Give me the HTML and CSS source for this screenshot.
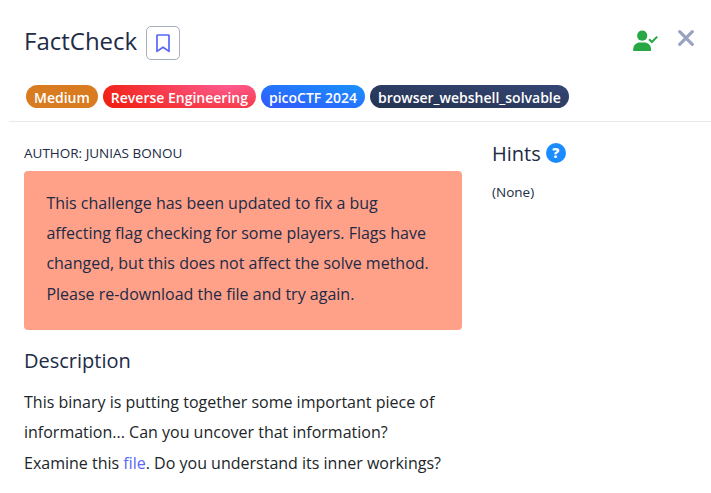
FILE: index.html
```html
<!DOCTYPE html>
<html lang="en">
<head>
<meta charset="utf-8">
<title>FactCheck</title>
<link rel="stylesheet" href="styles.css">
</head>
<body>
<div class="modal">
  <header class="header">
    <h1 class="title">FactCheck</h1>
    <button class="bookmark" aria-label="Bookmark">
      <svg width="14" height="19" viewBox="0 0 14 19"><path d="M1 1.600Q1 1 1.600 1H12.400Q13 1 13 1.600V17.400L7 13.200L1 17.400Z" fill="none" stroke="#5767f7" stroke-width="1.700" stroke-linejoin="round"/></svg>
    </button>
    <svg class="solved" width="26" height="22" viewBox="0 0 26 22"><circle cx="9.200" cy="5.700" r="5.100" fill="#28a745"/><path d="M0.200 21V19.300C.2 15 3.600 12.400 7 12.400H11.200C14.800 12.400 18 15 18 19.300V21Z" fill="#28a745"/><path d="M16 9.200L18.900 12L24.200 6.600" fill="none" stroke="#28a745" stroke-width="2"/></svg>
    <svg class="close" width="16" height="16" viewBox="0 0 16 16"><path d="M1.700 1.700L14.300 14.300M14.300 1.700L1.700 14.300" stroke="#9aa3bf" stroke-width="3.200" stroke-linecap="round"/></svg>
  </header>
  <div class="tags">
    <span class="tag medium">Medium</span>
    <span class="tag category">Reverse Engineering</span>
    <span class="tag event">picoCTF 2024</span>
    <span class="tag feature">browser_webshell_solvable</span>
  </div>
  <div class="columns">
    <main class="main">
      <p class="small">AUTHOR: JUNIAS BONOU</p>
      <div class="notice">This challenge has been updated to fix a bug<br>affecting flag checking for some players. Flags have<br>changed, but this does not affect the solve method.<br>Please re-download the file and try again.</div>
      <h2 class="heading description">Description</h2>
      <p class="body">This binary is putting together some important piece of<br>information... Can you uncover that information?<br>Examine this <a class="link">file</a>. Do you understand its inner workings?</p>
    </main>
    <aside class="hints">
      <h2 class="heading">Hints <span class="help">?</span></h2>
      <p class="small none">(None)</p>
    </aside>
  </div>
</div>
</body>
</html>
```
FILE: styles.css
```css
* { box-sizing: border-box; }
body {
  margin: 0;
  background: #fff;
  color: #212b45;
  font-family: "Open Sans", sans-serif;
  font-size: 16px;
  overflow: hidden;
}
h1, h2, p { margin: 0; font-weight: 400; }
svg { display: block; }
.header {
  display: flex;
  align-items: flex-start;
  height: 85px;
  padding: 26px 17px 0 24px;
}
.title { font-size: 24px; line-height: 30px; }
.bookmark {
  display: flex;
  align-items: center;
  justify-content: center;
  width: 34px;
  height: 34px;
  margin-left: 9px;
  padding: 0;
  background: #fff;
  border: 1px solid #a5afbd;
  border-radius: 5px;
}
.solved { margin: 4px 0 0 auto; }
.close { margin: 4px 0 0 19px; }
.tags {
  display: flex;
  gap: 5px;
  height: 37px;
  margin-left: 9px;
  padding-left: 17px;
  border-bottom: 1px solid #e9e9eb;
}
.tag {
  height: 23px;
  padding: 0 8px;
  border-radius: 12px;
  color: #fff;
  font-size: 14px;
  font-weight: 600;
  line-height: 25px;
  white-space: nowrap;
}
.medium { background: #d97b20; }
.category { background: radial-gradient(130px 40px at 82% 0, #ff5b91, #f02215); }
.event { background: linear-gradient(to top right, #3257ff, #1992fa); }
.feature { background: linear-gradient(to top right, #253350, #344675); }
.columns { display: flex; gap: 30px; padding: 20px 24px 0; }
.main { width: 438px; flex: none; }
.small { font-size: 13.5px; line-height: 22px; }
.notice {
  height: 159px;
  margin-top: 7px;
  padding: 16.6px 22.4px;
  border-radius: 4px;
  background: #ffa089;
  line-height: 30.4px;
  white-space: nowrap;
}
.heading { font-size: 20px; line-height: 24px; }
.description { margin-top: 19px; }
.body { margin-top: 14px; color: #212529; line-height: 30.4px; white-space: nowrap; }
.link { color: #5767f7; }
.hints .heading { display: flex; align-items: center; gap: 5px; }
.help {
  width: 20px;
  height: 20px;
  margin-top: -3px;
  border-radius: 50%;
  background: #1b8cff;
  color: #fff;
  font-size: 14px;
  font-weight: 800;
  line-height: 20px;
  text-align: center;
}
.none { margin-top: 15px; }
```
